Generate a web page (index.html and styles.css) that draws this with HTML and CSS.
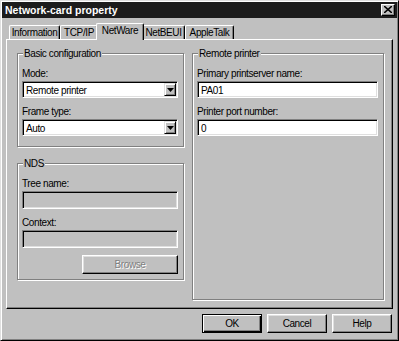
FILE: index.html
```html
<!DOCTYPE html>
<html>
  <head>
    <title>Network-card property</title>
    <link rel="stylesheet" href="styles.css">
  </head>
  <body>
    <div class="window">
      <div class="titlebar">
        <span class="title">Network-card property</span>
        <span class="close">
          <svg width="8" height="7" viewBox="0 0 8 7">
            <path d="M0 0 L8 7 M8 0 L0 7" stroke="#000" stroke-width="1.6" />
          </svg>
        </span>
      </div>

      <div class="tabs">
        <div class="tab tab-info">Information</div>
        <div class="tab tab-tcp">TCP/IP</div>
        <div class="tab tab-netware selected">NetWare</div>
        <div class="tab tab-netbeui">NetBEUI</div>
        <div class="tab tab-apple">AppleTalk</div>
      </div>

      <div class="panel">
        <div class="col-left">
          <fieldset class="group group-basic">
            <legend>Basic configuration</legend>
            <label class="field-label">Mode:</label>
            <div class="combo">
              <span class="combo-text">Remote printer</span>
              <span class="combo-btn">
                <svg width="7" height="4" viewBox="0 0 7 4"><path d="M0 0 H7 L3.5 4 Z" fill="#000" /></svg>
              </span>
            </div>
            <label class="field-label">Frame type:</label>
            <div class="combo">
              <span class="combo-text">Auto</span>
              <span class="combo-btn">
                <svg width="7" height="4" viewBox="0 0 7 4"><path d="M0 0 H7 L3.5 4 Z" fill="#000" /></svg>
              </span>
            </div>
          </fieldset>

          <fieldset class="group group-nds">
            <legend>NDS</legend>
            <label class="field-label">Tree name:</label>
            <div class="textbox disabled"></div>
            <label class="field-label">Context:</label>
            <div class="textbox disabled"></div>
            <div class="browse-row">
              <button class="btn browse" disabled>Browse</button>
            </div>
          </fieldset>
        </div>

        <fieldset class="group group-remote">
          <legend>Remote printer</legend>
          <label class="field-label">Primary printserver name:</label>
          <div class="textbox">PA01</div>
          <label class="field-label">Printer port number:</label>
          <div class="textbox">0</div>
        </fieldset>
      </div>

      <div class="buttons">
        <button class="btn default">OK</button>
        <button class="btn">Cancel</button>
        <button class="btn">Help</button>
      </div>
    </div>
  </body>
</html>
```

FILE: styles.css
```css
* {
  box-sizing: border-box;
}

body {
  margin: 0;
  background-color: #c0c0c0;
  font-family: "Liberation Sans", Arial, sans-serif;
  font-size: 10px;
  letter-spacing: -0.4px;
  color: #000;
}

.window {
  width: 399px;
  height: 341px;
  padding: 1px;
  background-color: #c0c0c0;
  border: 1px solid;
  border-color: #dfdfdf #000 #000 #dfdfdf;
  box-shadow: inset 1px 1px #fff, inset -1px -1px #808080;
  display: flex;
  flex-direction: column;
}

.titlebar {
  height: 16px;
  background-color: #1c1c1c;
  color: #fff;
  display: flex;
  align-items: center;
  justify-content: space-between;
  padding: 0 2px 0 3px;
}

.title {
  font-weight: bold;
  font-size: 10.5px;
  letter-spacing: 0;
  line-height: 13px;
}

.close {
  width: 14px;
  height: 12px;
  background-color: #c0c0c0;
  border: 1px solid;
  border-color: #fff #000 #000 #fff;
  box-shadow: inset -1px -1px #808080;
  display: flex;
  align-items: center;
  justify-content: center;
  padding-bottom: 1px;
}

/* tab strip */

.tabs {
  display: flex;
  align-items: flex-end;
  height: 17px;
  margin: 5px 4px -1px;
  padding-left: 3px;
}

.tab {
  height: 15px;
  line-height: 13px;
  text-align: center;
  white-space: nowrap;
  border-top: 1px solid #fff;
  border-left: 1px solid #fff;
  border-right: 1px solid #000;
  border-radius: 2px 2px 0 0;
  box-shadow: inset -1px 0 #808080;
  background-color: #c0c0c0;
}

.tab-info { width: 51px; }
.tab-tcp { width: 38px; }
.tab-netware { width: 44px; }
.tab-netbeui { width: 43px; }
.tab-apple { width: 49px; }

.tab.selected {
  height: 17px;
  width: 48px;
  margin: 0 -2px;
  position: relative;
  z-index: 1;
}

/* page */

.panel {
  position: relative;
  height: 270px;
  margin: 0 4px;
  padding: 7px 8px 8px 10px;
  border: 1px solid;
  border-color: #fff #000 #000 #fff;
  box-shadow: inset -1px -1px #808080;
  display: flex;
  gap: 8px;
}

.col-left {
  width: 167px;
  display: flex;
  flex-direction: column;
}

.group {
  margin: 0;
  min-width: 0;
  padding: 0 5px 10px 4px;
  border: 1px solid #808080;
  box-shadow: 1px 1px #fff, inset 1px 1px #fff;
}

.group legend {
  padding: 0 1px;
  margin-left: 1px;
  line-height: 13px;
  background-color: #c0c0c0;
}

.group-nds {
  margin-top: 10px;
  padding-bottom: 5px;
}

.group-remote {
  flex: 1;
}

.field-label {
  display: block;
  line-height: 13px;
  margin: 7px 0 1px;
}

.combo,
.textbox {
  height: 17px;
  padding: 1px 1px 1px 3px;
  line-height: 13px;
  background-color: #fff;
  border: 1px solid;
  border-color: #808080 #fff #fff #808080;
  box-shadow: inset 1px 1px #000, inset -1px -1px #dfdfdf;
  white-space: nowrap;
}

.textbox {
  padding-top: 2px;
}

.textbox.disabled {
  height: 18px;
  background-color: #c0c0c0;
}

.combo {
  display: flex;
  justify-content: space-between;
}

.combo-text {
  padding-top: 1px;
}

.combo-btn {
  width: 12px;
  height: 13px;
  background-color: #c0c0c0;
  border: 1px solid;
  border-color: #dfdfdf #000 #000 #dfdfdf;
  box-shadow: inset 1px 1px #fff, inset -1px -1px #808080;
  display: flex;
  align-items: center;
  justify-content: center;
}

.browse-row {
  display: flex;
  justify-content: flex-end;
  margin-top: 7px;
}

/* push buttons */

.btn {
  width: 60px;
  height: 19px;
  padding: 0;
  font-family: inherit;
  font-size: 10px;
  letter-spacing: -0.4px;
  color: #000;
  background-color: #c0c0c0;
  border: 1px solid;
  border-color: #fff #000 #000 #fff;
  border-radius: 0;
  box-shadow: inset -1px -1px #808080, inset 1px 1px #dfdfdf;
}

.btn.default {
  border: 1px solid #000;
  box-shadow: inset 1px 1px #fff, inset -1px -1px #000, inset -2px -2px #808080;
}

.browse {
  width: 96px;
  color: #808080;
  text-shadow: 1px 1px #fff;
}

.buttons {
  display: flex;
  justify-content: flex-end;
  gap: 5px;
  margin-top: 5px;
  padding-right: 5px;
}
```
